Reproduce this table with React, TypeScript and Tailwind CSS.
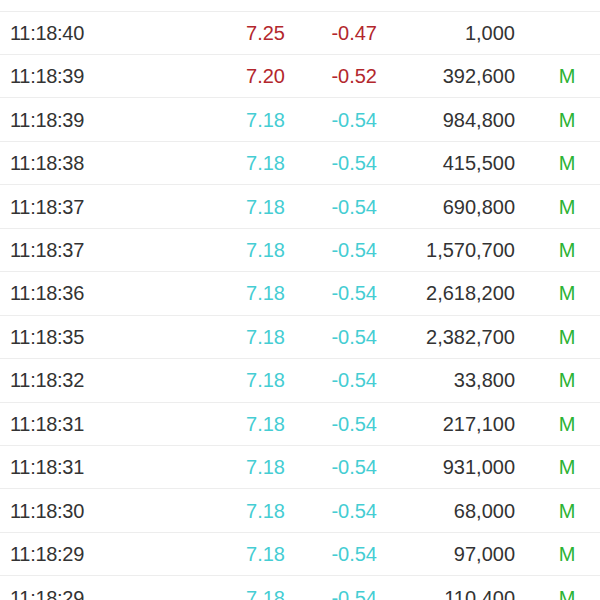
const rows = [
  { time: "11:18:40", price: "7.25", change: "-0.47", volume: "1,000", flag: "", up: true },
  { time: "11:18:39", price: "7.20", change: "-0.52", volume: "392,600", flag: "M", up: true },
  { time: "11:18:39", price: "7.18", change: "-0.54", volume: "984,800", flag: "M", up: false },
  { time: "11:18:38", price: "7.18", change: "-0.54", volume: "415,500", flag: "M", up: false },
  { time: "11:18:37", price: "7.18", change: "-0.54", volume: "690,800", flag: "M", up: false },
  { time: "11:18:37", price: "7.18", change: "-0.54", volume: "1,570,700", flag: "M", up: false },
  { time: "11:18:36", price: "7.18", change: "-0.54", volume: "2,618,200", flag: "M", up: false },
  { time: "11:18:35", price: "7.18", change: "-0.54", volume: "2,382,700", flag: "M", up: false },
  { time: "11:18:32", price: "7.18", change: "-0.54", volume: "33,800", flag: "M", up: false },
  { time: "11:18:31", price: "7.18", change: "-0.54", volume: "217,100", flag: "M", up: false },
  { time: "11:18:31", price: "7.18", change: "-0.54", volume: "931,000", flag: "M", up: false },
  { time: "11:18:30", price: "7.18", change: "-0.54", volume: "68,000", flag: "M", up: false },
  { time: "11:18:29", price: "7.18", change: "-0.54", volume: "97,000", flag: "M", up: false },
  { time: "11:18:29", price: "7.18", change: "-0.54", volume: "110,400", flag: "M", up: false },
]

export default function App() {
  return (
    <div className="w-[600px] h-[600px] overflow-hidden bg-white font-['Liberation_Sans',Arial,sans-serif] text-[20px] text-[#333333]">
      {/* Header (cut off above) */}
      <div className="h-[11.5px] border-b border-[#ededed]" />

      {rows.map((row, index) => (
        <div
          key={index}
          className="h-[43.46px] flex items-center pl-[10px] border-b border-[#ededed] leading-none"
        >
          <span className="w-[195px] shrink-0 tracking-[-0.3px]">{row.time}</span>
          <span className={`w-[80px] shrink-0 text-right ${row.up ? "text-[#b3272d]" : "text-[#45cdd3]"}`}>
            {row.price}
          </span>
          <span className={`w-[92px] shrink-0 text-right ${row.up ? "text-[#b3272d]" : "text-[#45cdd3]"}`}>
            {row.change}
          </span>
          <span className="w-[138px] shrink-0 text-right">{row.volume}</span>
          <span className="w-[104px] shrink-0 text-center text-[#2bb334]">{row.flag}</span>
        </div>
      ))}
    </div>
  )
}
